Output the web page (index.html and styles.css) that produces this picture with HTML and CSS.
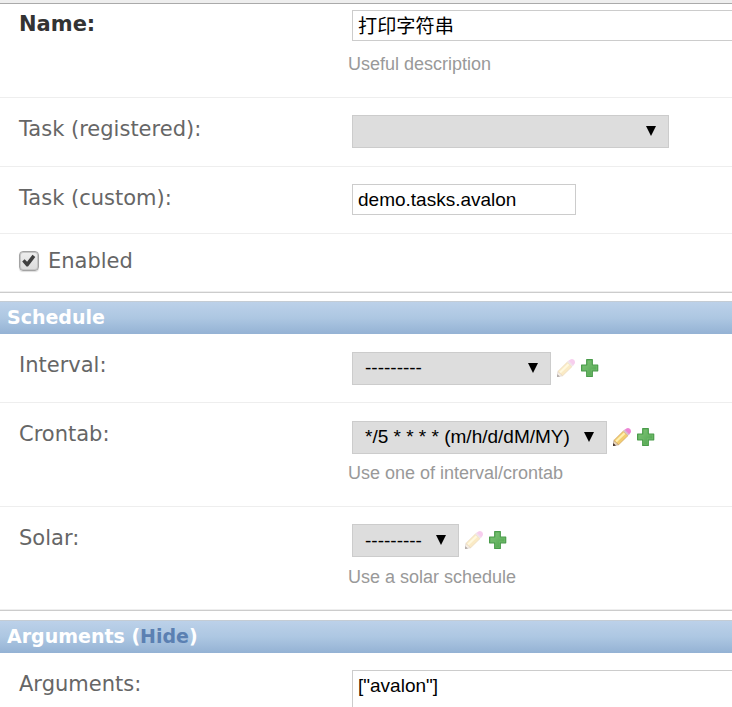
FILE: index.html
```html
<!DOCTYPE html>
<html lang="en">
<head>
<meta charset="utf-8">
<title>Change periodic task</title>
<link rel="stylesheet" href="styles.css">
</head>
<body>
<svg class="defs" width="0" height="0" aria-hidden="true">
  <defs>
    <linearGradient id="leaf" x1="0" y1="0" x2="1" y2="1"><stop offset="0" stop-color="#7fc377"/><stop offset="1" stop-color="#50a650"/></linearGradient>
    <symbol id="plus" viewBox="0 0 18 18">
      <path d="M5.700 .6h5.600v5.400h5.400v5.800h-5.400v5.600H5.700v-5.600H.6V6h5.100z" fill="#6fbb69" stroke="#4a9c4b" stroke-width="1.200" stroke-linejoin="round"/>
      <path d="M7 2h3v5.300h5.300v3.200H10V16H7v-5.500H2V7.300h5z" fill="url(#leaf)"/>
    </symbol>
    <symbol id="pencil" viewBox="0 0 18 18">
      <path d="M.9 12.400L5.700 16.700L.2 17.800z" fill="#ead8c0" stroke="#a18873" stroke-width=".6"/>
      <path d="M.3 15.200L2.900 17.400L0 18z" fill="#33231d"/>
      <path d="M.9 12.400L10.400 3L15 7.600L5.700 16.700z" fill="#f3cd70" stroke="#cfa05c" stroke-width=".7"/>
      <path d="M2.300 12.700L10.800 4.400L12.300 5.900L3.800 14.200z" fill="#fff0b0"/>
      <path d="M10.200 3L11.800 1.500L16.500 6.200L15 7.700z" fill="#d8c0cc"/>
      <path d="M11.600 1.800L13.400 .4Q15.500 -.5 17.100 1.100Q18.600 2.700 17.600 4.700L16.200 6.500z" fill="#ec86d5"/>
    </symbol>
  </defs>
</svg>
<div class="topbar"></div>
<form>
  <section class="module">
    <div class="row row-name">
      <label class="label required">Name:</label>
      <div class="field">
        <div class="input input-wide cjk">打印字符串</div>
        <p class="help">Useful description</p>
      </div>
    </div>
    <div class="row row-select">
      <label class="label">Task (registered):</label>
      <div class="field"><div class="select select-task"><span></span><i class="arrow"></i></div></div>
    </div>
    <div class="row row-custom">
      <label class="label">Task (custom):</label>
      <div class="field"><div class="input input-short">demo.tasks.avalon</div></div>
    </div>
    <div class="row row-check">
      <span class="checkbox"><svg viewBox="0 0 20 20" width="20" height="20"><path d="M3.200 10.500L5.600 8.300L8.100 10.800L13.500 3.800L16.300 5.900L9 15.500H7.500z" fill="#404040"/></svg></span>
      <label class="label">Enabled</label>
    </div>
  </section>
  <section class="module">
    <h2>Schedule</h2>
    <div class="row row-select">
      <label class="label">Interval:</label>
      <div class="field">
        <div class="related">
          <div class="select select-interval"><span>---------</span><i class="arrow"></i></div>
          <svg class="icon pencil faded"><use href="#pencil"/></svg><svg class="icon"><use href="#plus"/></svg>
        </div>
      </div>
    </div>
    <div class="row row-help">
      <label class="label">Crontab:</label>
      <div class="field">
        <div class="related">
          <div class="select select-crontab"><span>*/5 * * * * (m/h/d/dM/MY)</span><i class="arrow"></i></div>
          <svg class="icon pencil"><use href="#pencil"/></svg><svg class="icon"><use href="#plus"/></svg>
        </div>
        <p class="help">Use one of interval/crontab</p>
      </div>
    </div>
    <div class="row row-solar">
      <label class="label">Solar:</label>
      <div class="field">
        <div class="related">
          <div class="select select-solar"><span>---------</span><i class="arrow"></i></div>
          <svg class="icon pencil faded"><use href="#pencil"/></svg><svg class="icon"><use href="#plus"/></svg>
        </div>
        <p class="help">Use a solar schedule</p>
      </div>
    </div>
  </section>
  <section class="module arguments">
    <h2>Arguments (<a>Hide</a>)</h2>
    <div class="row row-args">
      <label class="label">Arguments:</label>
      <div class="field"><div class="input textarea">["avalon"]</div></div>
    </div>
  </section>
</form>
</body>
</html>
```
FILE: styles.css
```css
* { box-sizing: border-box; }
body {
  margin: 0;
  background: #fff;
  font-family: "DejaVu Sans", sans-serif;
  color: #666;
}
.defs { display: block; }
.topbar { height: 4px; background: #eee; border-bottom: 1px solid #aaa; }
.module { border-bottom: 1px solid #ccc; margin-bottom: 8px; }
.arguments { margin: 9px 0 0; border: 0; }
h2 {
  margin: 0;
  height: 33px;
  padding-left: 7px;
  border-top: 1px solid #c4ccd4;
  background: linear-gradient(#bcd1e9, #adc7e2 50%, #94b2d4);
  color: #fff;
  font-size: 19px;
  line-height: 31px;
}
h2 a { color: #5b80b2; }
.row { display: flex; border-bottom: 1px solid #eee; padding: 17px 0 0 19px; }
.row-name { height: 94px; padding-top: 6px; }
.row-select { height: 69px; }
.row-custom { height: 67px; }
.row-check { height: 58px; align-items: flex-start; }
.row-help { height: 104px; padding-top: 18px; }
.row-solar { height: 103px; }
.row-args { height: 54px; border: 0; }
.module + .module .row-select { padding-top: 18px; }
.label { width: 333px; flex: none; font-size: 21px; line-height: 28px; }
.row-name .label { line-height: 29px; }
.row-help .label, .module + .module .row-select .label { line-height: 26px; }
.required { color: #333; font-weight: bold; }
.field { flex: 1; min-width: 0; font-family: "Liberation Sans", "Noto Sans CJK SC", sans-serif; }
.input {
  height: 31px;
  padding: 0 5px;
  border: 1px solid #ccc;
  background: #fff;
  color: #000;
  font-size: 19px;
  line-height: 29px;
}
.input-wide { border-right: 0; }
.cjk { line-height: 31px; font-size: 19.2px; }
.input-short { width: 224px; }
.textarea { height: 37px; border-right: 0; border-bottom: 0; }
.help { margin: 13px 0 0 -4px; font-size: 18px; line-height: 21px; color: #999; }
.row-help .help { margin-top: 9px; }
.row-solar .help { margin-top: 10px; }
.related { display: flex; align-items: center; }
.select {
  display: flex;
  align-items: center;
  justify-content: space-between;
  height: 33px;
  padding: 0 12px;
  border: 1px solid #ccc;
  background: #ddd;
  color: #000;
  font-size: 19px;
  line-height: 29px;
  white-space: nowrap;
}
.select-task { width: 317px; }
.select-interval { width: 199px; }
.select-crontab { width: 255px; }
.select-solar { width: 107px; }
.select span { margin-bottom: 2px; }
.select-solar span { margin-bottom: 0; }
.arrow { width: 10px; height: 10px; margin-bottom: 1px; background: #000; clip-path: polygon(0 0, 100% 0, 50% 100%); }
.icon { width: 18px; height: 18px; margin-left: 6px; margin-bottom: 1px; }
.faded { opacity: .4; }
.checkbox {
  width: 20px;
  height: 20px;
  margin-right: 9px;
  border: 1px solid #a3a3a3;
  border-radius: 4px;
  background: linear-gradient(#eee, #dcdcdc);
  box-shadow: 0 1px 1px #ddd, inset 0 0 0 1px #c6c6c6;
}
.checkbox svg { display: block; margin: -1px; }
.row-check .label { width: auto; line-height: 20px; }
```
